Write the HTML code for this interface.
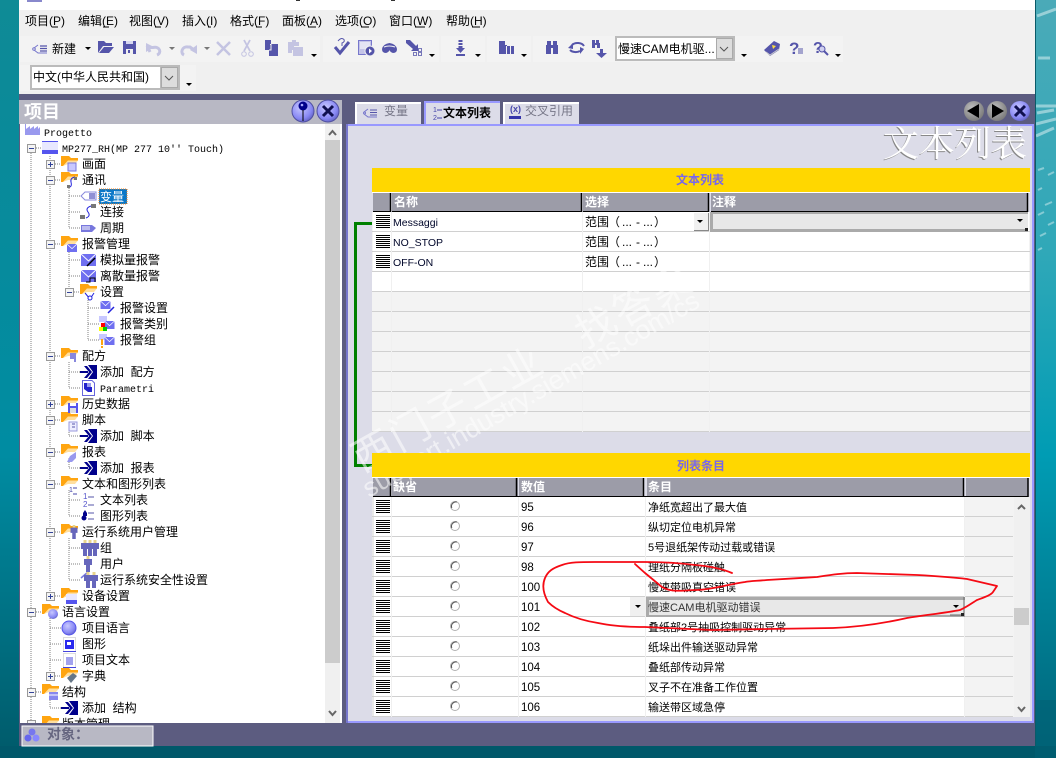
<!DOCTYPE html>
<html><head><meta charset="utf-8"><style>
html,body{margin:0;padding:0;width:1056px;height:758px;overflow:hidden;background:#007c90}
svg{display:block}
text{font-family:"Liberation Sans","WenQuanYi Zen Hei","Noto Sans CJK SC",sans-serif;font-size:12px;fill:#000;white-space:pre}
.m{font-family:"Liberation Mono","WenQuanYi Zen Hei",monospace;font-size:10px}
.c{font-size:11px}
.n{font-size:10.5px;fill:#00062a}
.v{font-size:11.500px;fill:#000}
.h{font-weight:bold;fill:#fff;font-size:12px}
.y{font-weight:bold;fill:#7766ee;font-size:12px;text-anchor:middle}
.d{stroke:#808080;stroke-width:1;stroke-dasharray:1 1;fill:none}
.g{fill:#5555aa}.l{fill:#c4c4e2}
</style></head><body>
<svg width="1056" height="758" viewBox="0 0 1056 758" xmlns="http://www.w3.org/2000/svg">
<defs>
<linearGradient id="bl" x1="0" y1="0" x2="0" y2="1"><stop offset="0" stop-color="#0f8b96"/><stop offset=".1" stop-color="#0c8a98"/><stop offset=".6" stop-color="#008ca2"/><stop offset="1" stop-color="#005a6a"/></linearGradient>
<linearGradient id="br" x1="0" y1="0" x2="0" y2="1"><stop offset="0" stop-color="#4aaab8"/><stop offset=".33" stop-color="#30a8b8"/><stop offset=".6" stop-color="#009cb4"/><stop offset="1" stop-color="#006478"/></linearGradient>
<radialGradient id="blue" cx=".4" cy=".35" r=".7"><stop offset="0" stop-color="#c8c8ff"/><stop offset=".7" stop-color="#8888f4"/><stop offset="1" stop-color="#6060c0"/></radialGradient>
<radialGradient id="gr" cx=".4" cy=".35" r=".7"><stop offset="0" stop-color="#c0c0c0"/><stop offset="1" stop-color="#777"/></radialGradient>
<symbol id="f" width="17" height="16" viewBox="0 0 17 16"><path d="M0 0H8L10 2H17V4.500H7L2 10H0Z" fill="#ffa510"/><path d="M2 10L7 4.500H17L14 8H7Z" fill="#ffc040" opacity=".5"/></symbol>
<symbol id="mi" width="10" height="10" viewBox="0 0 10 10"><rect x=".5" y=".5" width="8" height="8" fill="#f4f4f4" stroke="#999"/><path d="M2 4.500H7" stroke="#334499"/></symbol>
<symbol id="pl" width="10" height="10" viewBox="0 0 10 10"><rect x=".5" y=".5" width="8" height="8" fill="#f4f4f4" stroke="#999"/><path d="M2 4.500H7M4.500 2V7" stroke="#334499"/></symbol>
<symbol id="add" width="17" height="14" viewBox="0 0 17 14"><path d="M0 6H8V8H0Z" fill="#00008b"/><path d="M4 1H7L12 7L7 13H4L9 7Z" fill="#00008b"/><path d="M8 0H17V14H8L13 7Z" fill="#00008b"/></symbol>
<symbol id="env" width="15" height="12" viewBox="0 0 15 12"><rect width="15" height="12" fill="#6f6ff0"/><path d="M0 0L7.500 7L15 0" stroke="#fff" fill="none"/></symbol>
<symbol id="rh" width="14" height="14" viewBox="0 0 14 14"><path d="M0 .5H14M0 2.500H14M0 4.500H14M0 6.500H14M0 8.500H14M0 10.500H14M0 12.500H14" stroke="#000"/></symbol>
<symbol id="man" width="8" height="16" viewBox="0 0 8 16"><rect x="2.500" width="3" height="3" fill="#e8d48c"/><path d="M0 3H8V9H6V16H2V9H0Z" fill="#6666bb"/></symbol>
<symbol id="da" width="6" height="3" viewBox="0 0 6 3"><path d="M0 0H6L3 3Z" fill="#000"/></symbol>
<symbol id="dg" width="6" height="3" viewBox="0 0 6 3"><path d="M0 0H6L3 3Z" fill="#777"/></symbol>
<symbol id="gr" width="3" height="22" viewBox="0 0 3 22"><rect width="3" height="22" fill="#aaa"/><path d="M0 1H3M0 3H3M0 5H3M0 7H3M0 9H3M0 11H3M0 13H3M0 15H3M0 17H3M0 19H3M0 21H3" stroke="#f0f0f0"/></symbol>
<symbol id="r" width="12" height="12" viewBox="0 0 12 12"><circle cx="6" cy="6" r="4.500" fill="#fff" stroke="#b0b0b0"/><path d="M2.800 8A4.500 4.500 0 0 1 8 2" stroke="#555" fill="none"/></symbol>
</defs>

<!-- desktop -->
<rect width="1056" height="758" fill="url(#br)"/>
<rect x="0" y="0" width="19" height="758" fill="url(#bl)"/>
<rect x="0" y="746" width="1056" height="12" fill="#00586a"/>
<rect x="1035" y="700" width="21" height="58" fill="#006074" opacity=".6"/>
<g stroke="#d8eef0" fill="none">
<path d="M1037 16L1056 9M1038 58H1050M1036 106H1056M1037 113L1054 110M1036 124L1056 119M1036 136L1054 128" stroke-width="3" opacity=".55"/>
<path d="M1038 170L1044 168M1048 175L1054 172M1038 190L1042 188M1045 205L1052 202M1038 215L1044 212M1048 225L1054 222M1040 236L1046 233M1038 250L1042 248" stroke-width="2" opacity=".5"/>
</g>
<rect x="1035" y="0" width="1" height="746" fill="#0a5a68"/>

<!-- window -->
<rect x="19" y="0" width="1016" height="746" fill="#5c5c80"/>
<rect x="19" y="0" width="1016" height="10" fill="#fff"/>
<rect x="27" y="0" width="15" height="2" fill="#8888cc"/>
<rect x="296" y="0" width="4" height="1" fill="#333"/><rect x="391" y="0" width="4" height="1" fill="#333"/>
<rect x="19" y="10" width="1016" height="84" fill="#f0f0f0"/>

<!-- menu -->
<g>
<text x="25" y="25">项目(P)</text><text x="78" y="25">编辑(E)</text><text x="129" y="25">视图(V)</text><text x="182" y="25">插入(I)</text><text x="230" y="25">格式(F)</text><text x="282" y="25">面板(A)</text><text x="335" y="25">选项(O)</text><text x="389" y="25">窗口(W)</text><text x="446" y="25">帮助(H)</text>
<path d="M52 27h6M103 27h6M155 27h6M208 27h3M256 27h6M308 27h8M361 27h8M415 27h10M472 27h8" stroke="#000"/>
</g>

<!-- toolbar 1 -->
<rect x="20" y="36" width="300" height="26" fill="#f3f3f3"/><rect x="323" y="36" width="116" height="26" fill="#f3f3f3"/><rect x="441" y="36" width="44" height="26" fill="#f3f3f3"/><rect x="487" y="36" width="44" height="26" fill="#f3f3f3"/><rect x="533" y="36" width="220" height="26" fill="#f3f3f3"/><rect x="753" y="36" width="90" height="26" fill="#f3f3f3"/>
<use href="#gr" x="21" y="38"/><use href="#gr" x="324" y="38"/><use href="#gr" x="442" y="38"/><use href="#gr" x="488" y="38"/><use href="#gr" x="534" y="38"/><use href="#gr" x="754" y="38"/>
<!-- new tag -->
<circle cx="34" cy="49" r="1.300" fill="none" stroke="#7777cc"/><path d="M34 48L38 45M34 50L38 53H47" fill="none" stroke="#7777cc"/><path d="M40 46h7M40 48.500h7M40 51h7" stroke="#5555aa" stroke-width="1.200"/>
<text x="52" y="53">新建</text>
<use href="#da" x="85" y="47"/>
<!-- open -->
<path class="g" d="M98 41H104L106 43H112V46H103L98 53Z"/><path class="g" d="M99 53L104 47H114L109 53Z"/>
<!-- save -->
<path class="g" d="M123 41H136V54H123Z"/><rect x="126" y="41" width="7" height="3" fill="#d8d8f0"/><rect x="126" y="49" width="7" height="5" fill="#f0f0f0"/><rect x="128" y="50" width="2" height="3" fill="#5555aa"/>
<!-- undo -->
<path d="M150 52L148 47.500H153C160 46 162 53 157 55" fill="none" stroke="#c4c4e2" stroke-width="3"/><path class="l" d="M146 43V52L154 47Z"/>
<use href="#dg" x="169" y="47"/>
<path d="M194 50L190 47H188C182 46 180 53 184 55" fill="none" stroke="#c4c4e2" stroke-width="3"/><path class="l" d="M197 45V54L190 50Z"/>
<use href="#dg" x="204" y="47"/>
<path d="M217 42L230 55M230 42L217 55" stroke="#c4c4e2" stroke-width="2.500"/>
<path d="M244 40L250 51M250 40L244 51" stroke="#c4c4e2" stroke-width="1.800"/><circle cx="244" cy="54" r="2.300" fill="none" stroke="#c4c4e2"/><circle cx="251" cy="54" r="2.300" fill="none" stroke="#c4c4e2"/>
<path class="g" d="M265 40H271V44H278V56H269V50H265Z"/><path d="M270 44.500H271V50H269" stroke="#f3f3f3" fill="none"/>
<path class="l" d="M292 40H296V42H299V46H294V50H292V53H288V42H292Z"/><rect x="293" y="47" width="10" height="9" class="l"/>
<use href="#da" x="311" y="54"/>
<!-- group2 -->
<path d="M335 47L340 53L349 42" fill="none" stroke="#5555aa" stroke-width="3"/><path d="M338 41Q341 37 344 39.500Q345 42 342 43V46" fill="none" stroke="#5555aa"/>
<rect x="358.500" y="40.500" width="13" height="14" fill="#c4c4e8" stroke="#7777cc"/><rect x="360" y="42" width="10" height="7" fill="#e4e4f4"/><circle cx="370" cy="51" r="5" fill="#5555aa" stroke="#f0f0f0"/><path d="M369 48.500l3 2.500-3 2.500z" fill="#fff"/>
<path class="g" d="M382 49Q383 44 389.500 43Q396 44 397 49Q397 53 393 53Q390 52 389.500 50Q389 52 386 53Q382 53 382 49Z"/><path d="M384 47Q389 45 395 47" stroke="#f3f3f3" fill="none"/>
<path class="g" d="M406 40H410L416 46L418 44V51H411L413 49L406 43Z"/><path d="M413.500 52.500h3v3h-3zM418.500 52.500h3v3h-3zM418.500 48.500h3v3h-3z" fill="none" stroke="#5555aa" stroke-width=".8"/>
<use href="#da" x="429" y="54"/>
<path d="M460.500 40V42M460.500 43V45M460.500 46V49" stroke="#5555aa" stroke-width="4"/><path class="g" d="M456 48H465L460.500 53ZM456 54H465V56H456Z"/>
<use href="#da" x="475" y="54"/>
<path class="g" d="M499 41h6v4h2v1h-1v8h-7z"/><path class="g" d="M507 46h3v8h-3zM511 46h3v8h-3z"/>
<use href="#da" x="521" y="54"/>
<path class="g" d="M547 41h4v4h2v-4h4v4h1v9h-5v-6h-2v6h-5v-9h1z"/>
<path d="M572 45A7 5 0 0 1 584 46M580 51A7 5 0 0 1 570 50" stroke="#5555aa" stroke-width="2" fill="none"/><path class="g" d="M568 48L573 43V49ZM584 49L580 54V47Z"/>
<path class="g" d="M592 40h3v3h1v-3h3v3h1v5h-3v-3h-2v3h-3zM600 49h3v4h4l-5.500 5-5.500-5h4z"/>
<!-- combo 1 -->
<rect x="615" y="36" width="120" height="25" fill="#bbb"/><rect x="617" y="38" width="116" height="21" fill="#fff"/>
<text x="618" y="53">慢速CAM电机驱...</text>
<rect x="716.500" y="38.500" width="16" height="20" fill="#ddd" stroke="#aaa"/><path d="M720 47l4 4 4-4" fill="none" stroke="#555"/>
<use href="#da" x="741" y="54"/>
<!-- help -->
<path d="M764 50L774 41L780 44L779 50L770 56Z" fill="#5555aa"/><path d="M772 45l4 1-3 3z" fill="#ffe040"/><path d="M766 52l4 3 9-6" stroke="#ccc" fill="none"/>
<text x="789" y="54" style="font-size:17px;font-weight:bold;fill:#5555aa">?</text><path d="M798 49h5M798 51h5M798 53h5" stroke="#5555aa"/>
<text x="813" y="53" style="font-size:16px;font-weight:bold;fill:#5555aa">?</text><circle cx="822" cy="49" r="3" fill="#d0d0ef" stroke="#5555aa"/><path d="M824 51l4 4" stroke="#5555aa" stroke-width="2"/>
<use href="#da" x="835" y="54"/>

<!-- toolbar 2 -->
<rect x="20" y="65" width="176" height="26" fill="#f3f3f3"/>
<use href="#gr" x="21" y="67"/>
<rect x="30" y="65" width="150" height="25" fill="#bbb"/><rect x="32" y="67" width="128" height="21" fill="#fff"/>
<text x="33" y="81">中文(中华人民共和国)</text>
<rect x="161.500" y="67.500" width="16" height="20" fill="#ddd" stroke="#aaa"/><path d="M165 76l4 4 4-4" fill="none" stroke="#555"/>
<use href="#da" x="186" y="83"/>

<!-- left panel -->
<rect x="19" y="100" width="323" height="24" fill="#b8b8c4"/>
<text x="24" y="118" style="font-size:18px;fill:#fff;font-weight:bold">项目</text>
<circle cx="303" cy="111" r="11" fill="url(#blue)" stroke="#5050a0"/><circle cx="303" cy="106" r="4.500" fill="#00008b"/><circle cx="302" cy="105" r="1.300" fill="#aaf"/><path d="M303 110V121" stroke="#000"/>
<circle cx="328" cy="111" r="11" fill="url(#blue)" stroke="#5050a0"/><path d="M323 106L333 116M333 106L323 116" stroke="#101050" stroke-width="3"/>
<rect x="20" y="124" width="322" height="599" fill="#fff"/>
<rect x="325" y="124" width="15" height="599" fill="#f0f0f0"/>
<rect x="325" y="140" width="15" height="523" fill="#cccccc"/>
<path d="M329 135L332.500 131L336 135" fill="none" stroke="#666" stroke-width="2"/>
<path d="M329 711L332.500 715L336 711" fill="none" stroke="#666" stroke-width="2"/>

<!-- tree lines -->
<path class="d" d="M31 153V723M50 156V596M50 618V676M50 698V708M69 186V228M69 250V292M88 298V340M69 362V388M69 426V436M69 458V468M69 490V516M69 538V580"/>
<path class="d" d="M36 148H42M55 164H61M55 180H61M69 196H81M69 212H81M69 228H81M55 244H61M69 260H81M69 276H81M74 292H80M88 308H100M88 324H100M88 340H100M55 356H61M69 372H80M69 388H81M55 404H61M55 420H61M69 436H80M55 452H61M69 468H80M55 484H61M69 500H81M69 516H81M55 532H61M69 548H81M69 564H81M69 580H81M55 596H61M36 612H42M50 628H62M50 644H62M50 660H62M55 676H61M36 692H42M50 708H61"/>

<!-- tree icons -->
<path d="M25 134V124H26V129L30 126V129L34 126V129L38 126V129L40 127V135H25Z" fill="#9999ee"/>
<rect x="42" y="141" width="16" height="13" fill="#e8e8ff"/><rect x="42" y="150" width="16" height="4" fill="#5555ee"/><rect x="42" y="141" width="16" height="1" fill="#5555ee"/>
<use href="#mi" x="27" y="144"/>
<g>
<use href="#pl" x="46" y="160"/><use href="#mi" x="46" y="176"/><use href="#mi" x="46" y="240"/><use href="#mi" x="65" y="288"/><use href="#mi" x="46" y="352"/><use href="#pl" x="46" y="400"/><use href="#mi" x="46" y="416"/><use href="#mi" x="46" y="448"/><use href="#mi" x="46" y="480"/><use href="#mi" x="46" y="528"/><use href="#pl" x="46" y="592"/><use href="#mi" x="27" y="608"/><use href="#pl" x="46" y="672"/><use href="#mi" x="27" y="688"/><use href="#mi" x="27" y="720"/>
</g>
<g>
<use href="#f" x="61" y="156"/><use href="#f" x="61" y="172"/><use href="#f" x="61" y="236"/><use href="#f" x="80" y="284"/><use href="#f" x="61" y="348"/><use href="#f" x="61" y="396"/><use href="#f" x="61" y="412"/><use href="#f" x="61" y="444"/><use href="#f" x="61" y="476"/><use href="#f" x="61" y="524"/><use href="#f" x="61" y="588"/><use href="#f" x="42" y="604"/><use href="#f" x="61" y="668"/><use href="#f" x="42" y="684"/><use href="#f" x="42" y="716"/>
</g>
<!-- overlays -->
<rect x="68" y="163" width="8" height="8" fill="#c8c8ff" stroke="#7777dd"/>
<path d="M75 177Q70 178 71 182T70 187" fill="none" stroke="#2222dd"/><rect x="74" y="177" width="3" height="3" fill="#777"/><rect x="67" y="185" width="3" height="3" fill="#777"/>
<path d="M81 196L85 192H96V200H85Z" fill="#fff" stroke="#8888dd"/><path d="M89 194h6M89 196h6M89 198h6" stroke="#2222aa"/>
<rect x="99" y="189" width="28" height="15" fill="#0a78c8" stroke="#f08020" stroke-dasharray="1 1"/><text x="100" y="201" style="fill:#fff">变量</text>
<path d="M91 206Q85 208 88 212T86 218" fill="none" stroke="#2222dd"/><rect x="91" y="204" width="5" height="4" fill="#777"/><rect x="80" y="215" width="5" height="4" fill="#777"/>
<path d="M81 225H92L96 228L92 232H81Z" fill="#7777dd"/><path d="M82 227h8M82 229h8" stroke="#fff"/>
<use href="#env" x="67" y="244" width="10" height="8"/>
<use href="#env" x="81" y="254"/><path d="M87 266L95 258" stroke="#000" stroke-width="1.500"/>
<use href="#env" x="81" y="270"/><path d="M86 282H90V278H95V282" stroke="#000" fill="none"/>
<path d="M85 293L90 299L94 293" stroke="#2222dd" fill="none"/><circle cx="90" cy="298" r="2" fill="#fff" stroke="#2222dd"/>
<use href="#env" x="100" y="301" width="11" height="8"/><path d="M108 313L114 307" stroke="#2222dd" stroke-width="1.500"/>
<rect x="99" y="316" width="8" height="6" fill="#c8c8ff"/><use href="#env" x="104" y="321" width="11" height="8"/><rect x="101" y="323" width="4" height="4" fill="#f00"/><rect x="99" y="327" width="4" height="4" fill="#ff0"/><rect x="103" y="327" width="4" height="4" fill="#0c0"/>
<rect x="99" y="334" width="8" height="6" fill="#c8c8ff"/><use href="#env" x="104" y="337" width="11" height="8"/><path d="M102 339V345M102 346V348" stroke="#ffa510" stroke-width="2"/>
<path d="M70 353H76V362H74V359H70Z" fill="#8888dd"/>
<use href="#add" x="80" y="365"/>
<path d="M82.500 380.500H92L94.500 383V395.500H82.500Z" fill="#fff" stroke="#6666dd"/><path d="M84 383H87V387H92V392H88L84 389Z" fill="#2222cc"/><path d="M87 383H91V387H87Z" fill="#9999ee"/>
<rect x="68" y="403" width="10" height="10" fill="#5555ee"/><rect x="70" y="403" width="6" height="3" fill="#fff"/><rect x="70" y="408" width="6" height="5" fill="#ddd"/>
<rect x="69" y="422" width="8" height="9" fill="#eef" stroke="#9999dd"/><path d="M72 424h3M72 427h3" stroke="#5555aa"/>
<use href="#add" x="80" y="429"/>
<path d="M67 462L70 456L76 452V458L72 462Z" fill="#9999ee"/>
<use href="#add" x="80" y="461"/>
<text x="69" y="492" style="font-size:7px;fill:#4444aa">1</text><path d="M73 488h4M73 494h4" stroke="#4444aa"/>
<text x="83" y="499" style="font-size:8px;fill:#5555cc">1</text><text x="83" y="507" style="font-size:8px;fill:#5555cc">2</text><path d="M88 497h6M88 505h6" stroke="#5555aa"/>
<path d="M83 513L85 510L87 513V516H83Z" fill="#00008b"/><circle cx="84" cy="518" r="2.500" fill="#00008b"/><path d="M88 513h6M88 519h6" stroke="#5555aa"/>
<use href="#man" x="70" y="525" height="14"/>
<use href="#man" x="81" y="540"/><use href="#man" x="86" y="540"/><use href="#man" x="91" y="540"/>
<use href="#man" x="84" y="556"/>
<path d="M81 578L88 572" stroke="#7777dd" stroke-width="1.500"/><use href="#man" x="84" y="572"/><use href="#man" x="90" y="572"/>
<rect x="66" y="594" width="11" height="10" fill="#e8e8ff"/><rect x="66" y="600" width="11" height="4" fill="#5555ee"/>
<circle cx="53" cy="614" r="5" fill="url(#blue)"/>
<circle cx="69" cy="628" r="7" fill="url(#blue)" stroke="#5555ee"/>
<rect x="63.500" y="637.500" width="12" height="14" fill="#fff" stroke="#ddd"/><rect x="65" y="640" width="9" height="9" fill="#2a2aee"/><rect x="67" y="642" width="4" height="3" fill="#fff"/><path d="M63 651.500H76" stroke="#4444dd"/>
<rect x="63.500" y="653.500" width="12" height="14" fill="#fff" stroke="#ddd"/><path d="M66 658h7M66 660h7M66 662h7M66 664h7" stroke="#4444dd"/><path d="M63 667.500H76" stroke="#4444dd"/>
<path d="M67 678L73 673L77 676L71 683Z" fill="#667788"/>
<rect x="49" y="692" width="9" height="8" fill="#8888ee"/><path d="M49 695h9" stroke="#fff"/>
<use href="#add" x="61" y="701"/>

<!-- tree text -->
<g>
<text class="m" x="44" y="136">Progetto</text>
<text class="m" x="62" y="152">MP277_RH(MP 277 10'' Touch)</text>
<text x="82" y="168">画面</text><text x="82" y="184">通讯</text>
<text x="100" y="216">连接</text><text x="100" y="232">周期</text>
<text x="82" y="248">报警管理</text><text x="100" y="264">模拟量报警</text><text x="100" y="280">离散量报警</text><text x="100" y="296">设置</text>
<text x="120" y="312">报警设置</text><text x="120" y="328">报警类别</text><text x="120" y="344">报警组</text>
<text x="82" y="360">配方</text><text x="100" y="376">添加  配方</text><text class="m" x="100" y="392">Parametri</text>
<text x="82" y="408">历史数据</text><text x="82" y="424">脚本</text><text x="100" y="440">添加  脚本</text>
<text x="82" y="456">报表</text><text x="100" y="472">添加  报表</text>
<text x="82" y="488">文本和图形列表</text><text x="100" y="504">文本列表</text><text x="100" y="520">图形列表</text>
<text x="82" y="536">运行系统用户管理</text><text x="100" y="552">组</text><text x="100" y="568">用户</text><text x="100" y="584">运行系统安全性设置</text>
<text x="82" y="600">设备设置</text><text x="62" y="616">语言设置</text><text x="82" y="632">项目语言</text><text x="82" y="648">图形</text><text x="82" y="664">项目文本</text><text x="82" y="680">字典</text>
<text x="62" y="696">结构</text><text x="82" y="712">添加  结构</text>
</g>
<svg x="20" y="715" width="305" height="8"><text x="42" y="13">版本管理</text></svg>

<!-- status -->
<rect x="19" y="723" width="1016" height="23" fill="#5c5c80"/>
<rect x="22" y="726" width="131" height="20" fill="#b8b8c4" stroke="#fff" stroke-width="1"/>
<circle cx="28" cy="738" r="3.500" fill="#6666ee"/><circle cx="36" cy="738" r="3.500" fill="#8888ff"/><circle cx="32" cy="732" r="3.500" fill="#7777ee"/>
<text x="47" y="739" style="font-size:14px;font-weight:bold;fill:#666680">对象：</text>

<!-- tabs -->
<rect x="355" y="102" width="66" height="22" fill="#fff"/><rect x="357" y="104" width="64" height="20" fill="#dcdce8"/>
<circle cx="364.500" cy="113" r="1" fill="none" stroke="#7777cc"/><path d="M364 112L368 109M364 114L368 117H377" fill="none" stroke="#7777cc"/><path d="M370 110h7M370 112.500h7M370 115h7" stroke="#5555aa"/>
<text x="384" y="115" style="fill:#777788">变量</text>
<rect x="424" y="101" width="76" height="23" fill="#9999ff"/><rect x="426" y="103" width="74" height="21" fill="#dcdce8"/>
<text x="433" y="112" style="font-size:7px;fill:#4444aa">1</text><text x="433" y="120" style="font-size:7px;fill:#4444aa">2</text><path d="M437 110h5M437 118h5" stroke="#4444aa"/>
<text x="443" y="117" style="font-weight:bold">文本列表</text>
<rect x="503" y="102" width="76" height="22" fill="#fff"/><rect x="505" y="104" width="74" height="20" fill="#dcdce8"/>
<text x="510" y="112" style="font-size:9px;font-weight:bold;fill:#4444aa">(x)</text><rect x="509" y="116" width="12" height="3" fill="#3333aa"/>
<text x="525" y="115" style="fill:#777788">交叉引用</text>
<circle cx="974" cy="111" r="10" fill="url(#gr)"/><path d="M967 111L979 104V118Z" fill="#000"/>
<circle cx="997" cy="111" r="10" fill="url(#gr)"/><path d="M1004 111L992 104V118Z" fill="#000"/>
<circle cx="1020" cy="111" r="10" fill="url(#blue)"/><path d="M1015 106L1025 116M1025 106L1015 116" stroke="#101050" stroke-width="3"/>

<!-- content panel -->
<rect x="346" y="124" width="688" height="599" fill="#9999ff"/>
<rect x="348" y="126" width="684" height="595" fill="#dcdce8"/>
<rect x="346" y="124" width="2" height="599" fill="#7777cc"/>
<text x="882" y="157" style="font-family:'Noto Serif CJK SC',serif;font-size:36px;font-weight:400;fill:#888">文本列表</text>
<text x="883" y="156" style="font-family:'Noto Serif CJK SC',serif;font-size:36px;font-weight:400;fill:#fff">文本列表</text>

<!-- grid 1 -->
<rect x="372" y="168" width="658" height="24" fill="#ffd700"/>
<text class="y" x="700" y="184">文本列表</text>
<rect x="372" y="192" width="658" height="1" fill="#fff"/>
<rect x="373" y="193" width="18" height="19" fill="#9c9ca8"/><rect x="392" y="193" width="190" height="19" fill="#9c9ca8"/><rect x="583" y="193" width="126" height="19" fill="#9c9ca8"/><rect x="711" y="193" width="317" height="19" fill="#9c9ca8"/>
<path d="M390.500 193V212M581.500 193V212M708.500 193V212M1027.500 193V212" stroke="#000" stroke-width="1.500"/><path d="M373 211.500H390M392 211.500H581M583 211.500H708M711 211.500H1028" stroke="#000"/>
<text class="h" x="394" y="206">名称</text><text class="h" x="585" y="206">选择</text><text class="h" x="712" y="206">注释</text>
<rect x="372" y="212" width="658" height="220" fill="#f3f3f3"/>
<rect x="373" y="212" width="656" height="79" fill="#fff"/>
<path d="M372 231.500H1030M372 251.500H1030M372 271.500H1030M372 291.500H1030M372 311.500H1030M372 331.500H1030M372 351.500H1030M372 371.500H1030M372 391.500H1030M372 411.500H1030M372 431.500H1030" stroke="#d0d0d0"/>
<path d="M391.500 212V432M582.500 212V432M709.500 212V432" stroke="#f0f0f0"/>
<rect x="372" y="272" width="19" height="19" fill="#fff"/>
<use href="#rh" x="376" y="215"/><use href="#rh" x="376" y="235"/><use href="#rh" x="376" y="255"/>
<text class="n" x="393" y="226">Messaggi</text><text class="n" x="393" y="246">NO_STOP</text><text class="n" x="393" y="266">OFF-ON</text>
<text y="226"><tspan x="585">范围</tspan><tspan x="608">（</tspan><tspan x="622">...</tspan><tspan x="636">-</tspan><tspan x="643">...</tspan><tspan x="654">）</tspan></text>
<text y="246"><tspan x="585">范围</tspan><tspan x="608">（</tspan><tspan x="622">...</tspan><tspan x="636">-</tspan><tspan x="643">...</tspan><tspan x="654">）</tspan></text>
<text y="266"><tspan x="585">范围</tspan><tspan x="608">（</tspan><tspan x="622">...</tspan><tspan x="636">-</tspan><tspan x="643">...</tspan><tspan x="654">）</tspan></text>
<rect x="694" y="213" width="15" height="18" fill="#f0f0f0"/><path d="M708.500 213V231M694 230.500H709" stroke="#888"/><use href="#da" x="697" y="220"/>
<rect x="710" y="212" width="318" height="20" fill="#aaaaaa"/><rect x="713" y="214" width="315" height="15" fill="#e8e8e8"/>
<use href="#da" x="1017" y="219"/><rect x="1025" y="228" width="3" height="3" fill="#222"/>

<!-- grid 2 -->
<rect x="372" y="477" width="658" height="1" fill="#fff"/>
<rect x="373" y="478" width="18" height="19" fill="#9c9ca8"/><rect x="392" y="478" width="126" height="19" fill="#9c9ca8"/><rect x="519" y="478" width="125" height="19" fill="#9c9ca8"/><rect x="647" y="478" width="316" height="19" fill="#9c9ca8"/><rect x="966" y="478" width="62" height="19" fill="#9c9ca8"/>
<path d="M390.500 478V497M516.500 478V497M643.500 478V497M963.500 478V497M1028 478V497" stroke="#000" stroke-width="1.500"/><path d="M373 496.500H1028" stroke="#000"/>
<text class="h" x="393" y="491">缺省</text><text class="h" x="521" y="491">数值</text><text class="h" x="648" y="491">条目</text>
<rect x="372" y="497" width="658" height="220" fill="#fff"/>
<rect x="372" y="497" width="2" height="220" fill="#e8e8e8"/>
<rect x="965" y="497" width="49" height="220" fill="#f3f3f3"/>
<rect x="1014" y="497" width="16" height="220" fill="#f0f0f0"/>
<rect x="1014" y="608" width="15" height="17" fill="#cccccc"/>
<path d="M1018 509L1021.500 505.500L1025 509" fill="none" stroke="#666" stroke-width="2"/><path d="M1018 707L1021.500 711L1025 707" fill="none" stroke="#666" stroke-width="2"/>
<path d="M372 516.500H1013M372 536.500H1013M372 556.500H1013M372 576.500H1013M372 596.500H1013M372 616.500H1013M372 636.500H1013M372 656.500H1013M372 676.500H1013M372 696.500H1013M372 716.500H1013" stroke="#d0d0d0"/>
<path d="M391.500 497V717M518.500 497V717M645.500 497V717M964.500 497V717" stroke="#f0f0f0"/>
<g>
<use href="#rh" x="376" y="500"/><use href="#rh" x="376" y="520"/><use href="#rh" x="376" y="540"/><use href="#rh" x="376" y="560"/><use href="#rh" x="376" y="580"/><use href="#rh" x="376" y="600"/><use href="#rh" x="376" y="620"/><use href="#rh" x="376" y="640"/><use href="#rh" x="376" y="660"/><use href="#rh" x="376" y="680"/><use href="#rh" x="376" y="700"/>
<use href="#r" x="449" y="500"/><use href="#r" x="449" y="520"/><use href="#r" x="449" y="540"/><use href="#r" x="449" y="560"/><use href="#r" x="449" y="580"/><use href="#r" x="449" y="600"/><use href="#r" x="449" y="620"/><use href="#r" x="449" y="640"/><use href="#r" x="449" y="660"/><use href="#r" x="449" y="680"/><use href="#r" x="449" y="700"/>
</g>
<g>
<text class="v" x="521" y="511">95</text><text class="v" x="521" y="531">96</text><text class="v" x="521" y="551">97</text><text class="v" x="521" y="571">98</text><text class="v" x="521" y="591">100</text><text class="v" x="521" y="611">101</text><text class="v" x="521" y="631">102</text><text class="v" x="521" y="651">103</text><text class="v" x="521" y="671">104</text><text class="v" x="521" y="691">105</text><text class="v" x="521" y="711">106</text>
</g>
<rect x="630" y="597" width="15" height="19" fill="#f0f0f0"/><use href="#da" x="635" y="605"/>
<rect x="646" y="597" width="319" height="20" fill="#aaaaaa"/><rect x="649" y="600" width="316" height="15" fill="#e8e8e8"/>
<use href="#da" x="953" y="605"/><path d="M950 615H961" stroke="#666"/><path d="M964 597V615" stroke="#666"/><rect x="961" y="613" width="3" height="3" fill="#222"/>
<g>
<text class="c" x="648" y="511">净纸宽超出了最大值</text>
<text class="c" x="648" y="531">纵切定位电机异常</text>
<text class="c" x="648" y="551">5号退纸架传动过载或错误</text>
<text class="c" x="648" y="571">理纸分隔板碰触</text>
<text class="c" x="648" y="591">慢速带吸真空错误</text>
<text class="c" x="648" y="611" style="fill:#333">慢速CAM电机驱动错误</text>
<text class="c" x="648" y="631">叠纸部2号抽吸控制驱动异常</text>
<text class="c" x="648" y="651">纸垛出件输送驱动异常</text>
<text class="c" x="648" y="671">叠纸部传动异常</text>
<text class="c" x="648" y="691">叉子不在准备工作位置</text>
<text class="c" x="648" y="711">输送带区域急停</text>
</g>

<!-- green bracket -->
<path d="M372 223.500H355.500V465.500H372" fill="none" stroke="#008000" stroke-width="3"/>

<!-- watermark (white, sits beneath the yellow band) -->
<g opacity=".55">
<text transform="translate(362,473) rotate(-29.100)" style="font-size:40px;font-family:'Noto Sans CJK SC',sans-serif;font-weight:400;fill:#fff;letter-spacing:2.600px">西门子工业　找答案</text>
<text transform="translate(369,498) rotate(-30)" style="font-size:26.500px;fill:#fff">support.industry.siemens.com/cs</text>
</g>
<rect x="372" y="453" width="658" height="24" fill="#ffd700"/>
<text class="y" x="701" y="470">列表条目</text>

<!-- red scribble -->
<path d="M732 573C720 568 708 566 695 565C680 563 660 562 645 562L595 562C580 562 570 562 562 565C553 568 548 571 545 578C542 585 543 593 548 602C553 607 558 610 565 613C575 618 585 621 598 623C612 626 628 627 645 627L712 630L767 629L833 628C860 627 885 623 907 618C925 615 945 613 960 610C967 607 972 603 977 600C985 597 991 595 993 592L997 586L967 579C950 577 935 576 917 575L857 573C842 573 830 575 817 577C800 578 785 579 767 580C755 581 750 581 745 582C725 585 710 590 695 590C680 591 670 592 662 587C657 583 650 577 645 573L635 564" fill="none" stroke="#f50a14" stroke-width="1.800" stroke-linecap="round" stroke-linejoin="round"/>
</svg>
</body></html>
